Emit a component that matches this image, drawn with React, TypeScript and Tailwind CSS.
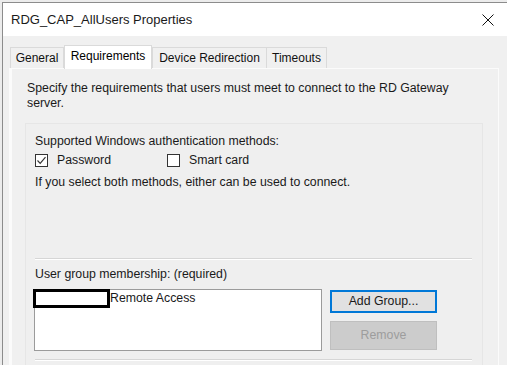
import React from "react";

const font = { fontFamily: '"Liberation Sans", Arial, sans-serif' };

function Check({ checked }: { checked?: boolean }) {
  return (
    <div className="w-[13px] h-[13px] border border-[#333333] bg-white flex items-center justify-center shrink-0">
      {checked && (
        <svg width="11" height="11" viewBox="0 0 11 11">
          <path d="M1.5 5.5 L4.2 8.3 L9.5 2.2" fill="none" stroke="#333" strokeWidth="1.2" />
        </svg>
      )}
    </div>
  );
}

export default function App() {
  return (
    <div className="w-[507px] h-[365px] overflow-hidden bg-[#ececec] pl-[2px] pt-[2px] text-[12.3px] text-black" style={font}>
      <div className="w-[520px] h-[380px] border-l border-t border-[#8c8c8c] bg-[#f0f0f0] flex flex-col">
        {/* title bar */}
        <div className="h-[33px] bg-white flex items-center shrink-0">
          <div className="pl-[8px] text-[13px] text-[#1a1a1a] flex-1">RDG_CAP_AllUsers Properties</div>
          <svg width="12" height="12" viewBox="0 0 12 12" className="mr-[28px]">
            <path d="M0.5 0.5 L11.5 11.5 M11.5 0.5 L0.5 11.5" stroke="#111" strokeWidth="1" />
          </svg>
        </div>
        {/* tabs */}
        <div className="flex items-end ml-[7px] mt-[8px] h-[24px] shrink-0 relative z-10 text-[12px]">
          <div className="w-[54px] h-[21px] border border-b-0 border-[#dadada] bg-[#f0f0f0] flex items-center justify-center text-[#111]">General</div>
          <div className="w-[88px] h-[24px] border-x border-t border-[#dadada] bg-white flex items-center justify-center -mb-[1px] pb-[3px]">Requirements</div>
          <div className="w-[115px] h-[21px] border border-b-0 border-[#dadada] bg-[#f0f0f0] flex items-center justify-center text-[#111]">Device Redirection</div>
          <div className="w-[60px] h-[21px] border border-b-0 border-l-0 border-[#dadada] bg-[#f0f0f0] flex items-center justify-center text-[#111]">Timeouts</div>
        </div>
        {/* panel */}
        <div className="ml-[6px] w-[490px] flex-1 border border-[#fbfbfb] border-l-[3px] bg-[#f0f0f0]">
          <div className="pl-[15px] pt-[12px] leading-[15px] text-[#1a1a1a]">
            <div>Specify the requirements that users must meet to connect to the RD Gateway</div>
            <div>server.</div>
          </div>
          <div className="ml-[13px] mt-[12px] w-[458px] h-[260px] border border-[#e6e6e6] bg-[#efefef] pl-[9px] pr-[10px] pt-[10px] flex flex-col leading-[15px] text-[#1a1a1a]">
            <div>Supported Windows authentication methods:</div>
            <div className="flex items-center mt-[4px] h-[15px]">
              <Check checked />
              <span className="ml-[9px] w-[110px]">Password</span>
              <Check />
              <span className="ml-[9px]">Smart card</span>
            </div>
            <div className="mt-[7px]">If you select both methods, either can be used to connect.</div>
            <div className="mt-[68px] h-[2px] border-t border-[#d6d6d6] border-b border-b-white" />
            <div className="mt-[7px]">User group membership: (required)</div>
            <div className="flex mt-[7px]">
              <div className="w-[288px] h-[62px] border border-[#9b9b9b] bg-white relative -ml-[1px]">
                <div className="flex items-center h-[18px] -mt-[1px] -ml-[2px]">
                  <div className="w-[77px] h-[19px] border-[3px] border-black bg-white" />
                  <span>Remote Access</span>
                </div>
              </div>
              <div className="ml-[8px] flex flex-col">
                <div className="mt-[1px] w-[107px] h-[23px] border-2 border-[#0078d7] bg-[#e1e1e1] flex items-center justify-center">Add Group...</div>
                <div className="mt-[8px] w-[107px] h-[29px] border border-[#bfbfbf] bg-[#cccccc] flex items-center justify-center text-[#9d9d9d]">Remove</div>
              </div>
            </div>
            <div className="mt-[8px] h-[2px] border-t border-[#d6d6d6] border-b border-b-white" />
          </div>
        </div>
      </div>
    </div>
  );
}
